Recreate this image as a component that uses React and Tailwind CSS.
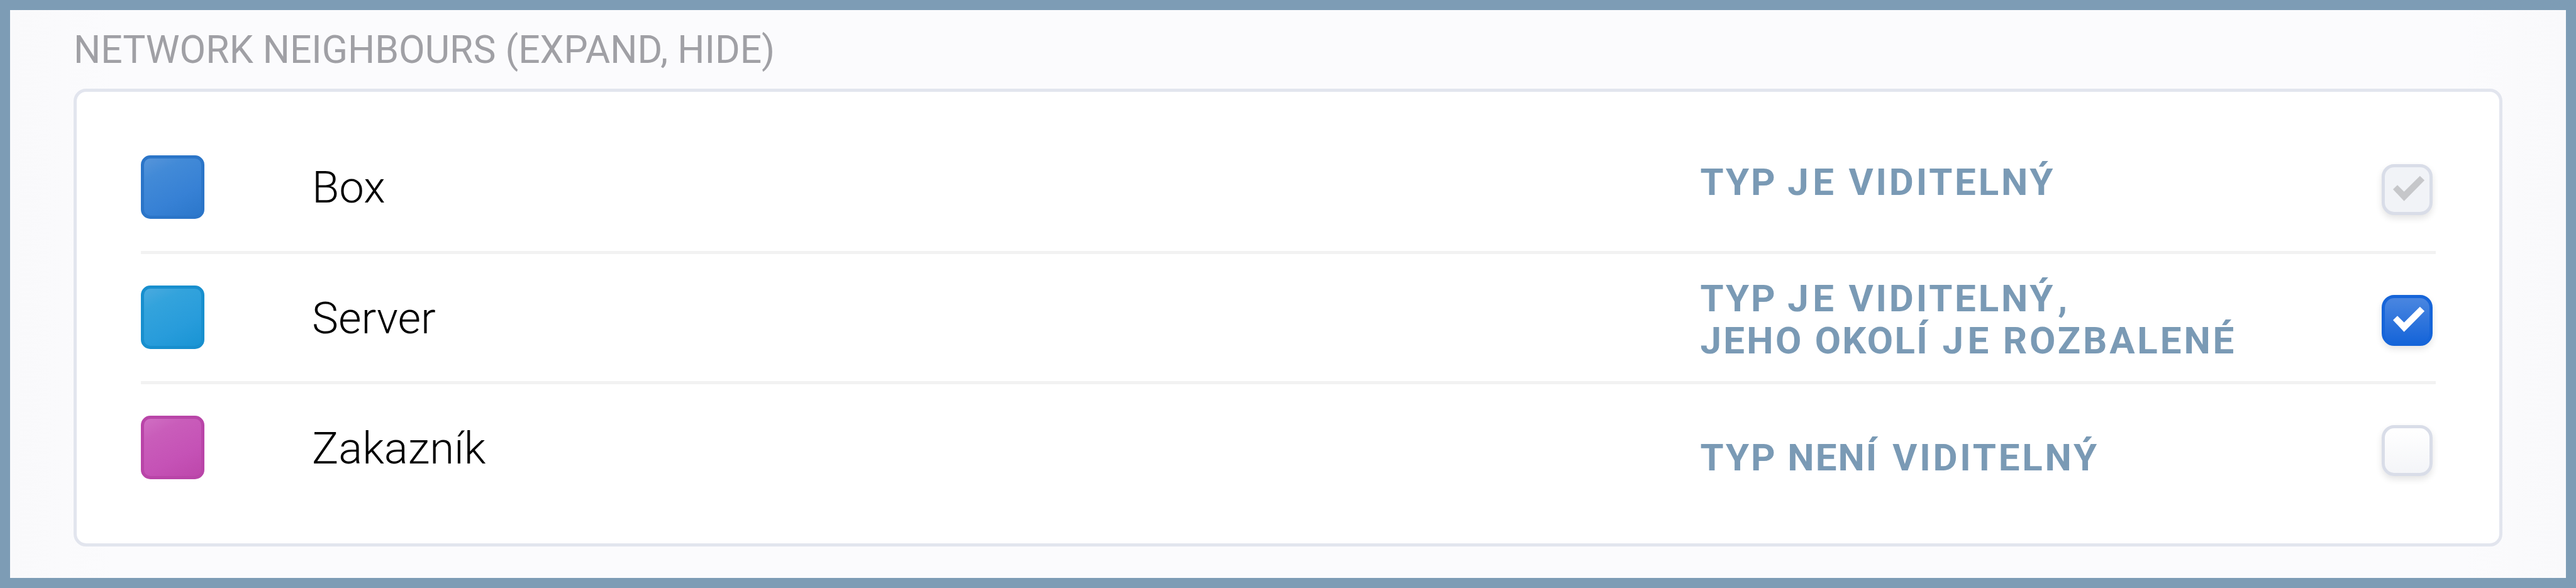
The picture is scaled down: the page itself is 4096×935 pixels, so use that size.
import React, { useState } from "react";

const initialTypes = [
    {
        id: "box",
        name: "Box",
        swatch: "border-[#2b75c8] bg-[linear-gradient(152deg,#5795da_0%,#428ad7_25%,#3781d5_65%,#2b77cb_100%)]",
        checked: true,
        disabled: true,
        noteOffset: "pt-[60px]",
        note: [
            [
                ["TYP", "tracking-[2.8px] mr-[2px]"],
                ["JE", "tracking-[6.5px] mr-[2px]"],
                ["VIDITELNÝ", "tracking-[3.8px]"],
            ],
        ],
    },
    {
        id: "server",
        name: "Server",
        swatch: "border-[#188fce] bg-[linear-gradient(152deg,#4baadf_0%,#33a3dc_25%,#289cdb_65%,#1994d4_100%)]",
        checked: true,
        disabled: false,
        noteOffset: "pt-[37.4px]",
        note: [
            [
                ["TYP", "tracking-[2.8px] mr-[2px]"],
                ["JE", "tracking-[6.5px] mr-[2px]"],
                ["VIDITELNÝ", "tracking-[3.8px]", ","],
            ],
            [
                ["JEHO", "tracking-[3.3px] mr-[3px]"],
                ["OKOLÍ", "tracking-[2.3px] mr-[6.5px]"],
                ["JE", "tracking-[6.5px] mr-[1px]"],
                ["ROZBALENÉ", "tracking-[3.9px]"],
            ],
        ],
    },
    {
        id: "zakaznik",
        name: "Zakazník",
        swatch: "border-[#b945a8] bg-[linear-gradient(152deg,#d06fc3_0%,#c95dba_25%,#c552b6_65%,#bd47ab_100%)]",
        checked: false,
        disabled: false,
        noteOffset: "pt-[83px]",
        note: [
            [
                ["TYP", "tracking-[2.8px] mr-[2px]"],
                ["NENÍ", "tracking-[2px] mr-[8px]"],
                ["VIDITELNÝ", "tracking-[3.8px]"],
            ],
        ],
    },
];

const getBoxStyle = ({ checked, disabled }) => {
    if (disabled) return "border-[#d9dde8] bg-[#f1f3f7] text-[#c6c7ca]";
    if (checked) return "border-[#1665d9] bg-[linear-gradient(180deg,#4a86e0,#1665d9)] bg-origin-padding text-white";
    return "border-[#d9dde8] bg-[linear-gradient(180deg,#ffffff,#f4f5f8)] bg-origin-padding text-transparent";
};

const Checkbox = ({ type, onToggle }) => (
    <button
        role="checkbox"
        aria-checked={type.checked}
        aria-label={type.name}
        disabled={type.disabled}
        onClick={() => onToggle(type.id)}
        className={`size-[81px] shrink-0 border-5 rounded-[20px] shadow-[0_5px_11px_rgba(0,0,0,0.11)] ${getBoxStyle(type)}`}
    >
        {type.checked && (
            <svg viewBox="19 19 262 262" fill="currentColor" className="size-full">
                <path d="M67 148 93 123 132 162 225 70 252 96 132 217Z" />
            </svg>
        )}
    </button>
);

const Note = ({ lines, offset }) => (
    <div className={`w-[1083px] shrink-0 font-bold text-[60px] leading-[67.5px] text-[#7a9ab5] whitespace-nowrap ${offset}`}>
        {lines.map((words, i) => (
            <p key={i}>
                {words.map(([word, spacing, mark], j) => (
                    <React.Fragment key={j}>
                        {j > 0 && " "}
                        <span className={spacing}>{word}</span>
                        {mark && <span className="ml-1">{mark}</span>}
                    </React.Fragment>
                ))}
            </p>
        ))}
    </div>
);

const App = () => {
    const [types, setTypes] = useState(initialTypes);

    const handleToggle = (id) => {
        setTypes(types.map((t) => (t.id === id ? { ...t, checked: !t.checked } : t)));
    };

    return (
        <div className="h-[935px] border-16 border-[#7d9cb5] bg-[linear-gradient(90deg,#f9f9fb_0%,#fbfbfd_4%,#fbfbfd_96%,#f9f9fb_100%)] px-[101px] pt-[28.3px] font-['Roboto',sans-serif]">
            <h2 className="text-[60.6px] leading-[71px] text-[#a0a0a5]">NETWORK NEIGHBOURS (EXPAND, HIDE)</h2>

            <div className="mt-[25.3px] h-[728px] border-5 border-[#e2e5ee] rounded-[20px] bg-white px-[101.5px] pt-[50.7px]">
                {types.map((type, i) => (
                    <div
                        key={type.id}
                        className={`flex h-[207.3px] items-start ${i < types.length - 1 ? "border-b-5 border-[#f2f2f2]" : ""}`}
                    >
                        <div className={`mt-[50.5px] size-[101px] shrink-0 border-5 rounded-[15px] bg-origin-padding ${type.swatch}`}></div>
                        <p className="ml-[171.5px] mt-[60.2px] flex-1 font-light text-[70.7px] leading-[83px] text-black">{type.name}</p>
                        <Note lines={type.note} offset={type.noteOffset} />
                        <div className="mt-[65.2px] mr-[5px] flex">
                            <Checkbox type={type} onToggle={handleToggle} />
                        </div>
                    </div>
                ))}
            </div>
        </div>
    );
};

export default App;
